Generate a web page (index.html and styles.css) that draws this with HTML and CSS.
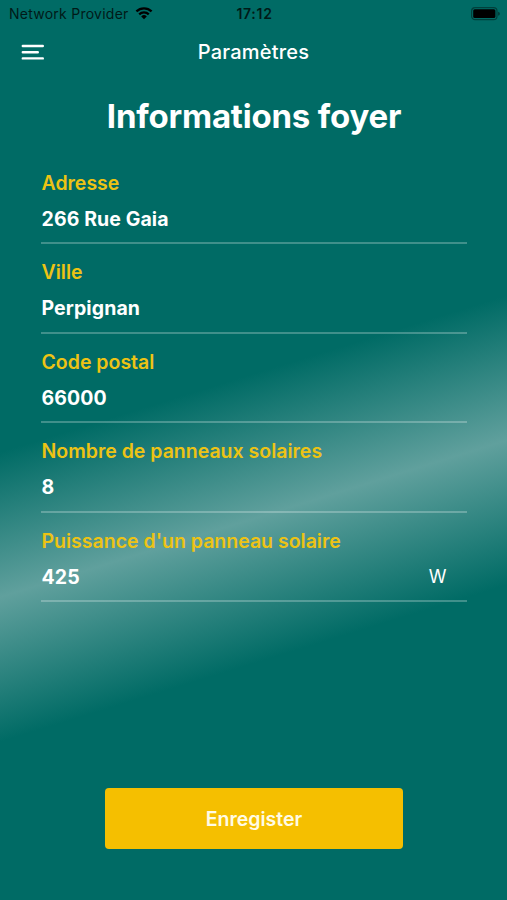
FILE: index.html
```
<!DOCTYPE html>
<html lang="fr">
<head>
  <meta charset="UTF-8">
  <meta name="viewport" content="width=device-width, initial-scale=1.0">
  <title>Paramètres</title>
  <link rel="stylesheet" href="styles.css">
</head>
<body>
  <div class="status-bar">
    <div class="network">
      <span class="provider">Network Provider</span>
      <svg class="wifi" viewBox="0 0 18 14" width="18" height="14">
        <path d="M0.6 4.6a12 12 0 0 1 16.8 0l-1.6 1.7a9.7 9.7 0 0 0-13.6 0z"/>
        <path d="M3.4 7.5a8 8 0 0 1 11.2 0l-1.6 1.7a5.8 5.8 0 0 0-8 0z"/>
        <path d="M6.2 10.4a4.1 4.1 0 0 1 5.6 0L9 13.2z"/>
      </svg>
    </div>
    <span class="time">17:12</span>
    <svg class="battery" viewBox="0 0 30 14" width="30" height="14">
      <rect class="battery-case" x="1.6" y="0.7" width="25.4" height="12" rx="3.5"/>
      <rect x="3.2" y="2.3" width="22.2" height="8.8" rx="1.5"/>
      <path class="battery-tip" d="M28 4.7q2 .6 2 2t-2 2z"/>
    </svg>
  </div>
  <header class="header">
    <svg class="menu" viewBox="0 0 23 17" width="23" height="17">
      <path d="M1.8 2h20M1.8 8.2h15M1.8 14.4h20"/>
    </svg>
    <span class="header-title">Paramètres</span>
  </header>
  <main class="content">
    <h1>Informations foyer</h1>
    <form class="form">
      <div class="field">
        <div class="label">Adresse</div>
        <div class="value">266 Rue Gaia</div>
      </div>
      <div class="field">
        <div class="label">Ville</div>
        <div class="value">Perpignan</div>
      </div>
      <div class="field">
        <div class="label">Code postal</div>
        <div class="value">66000</div>
      </div>
      <div class="field">
        <div class="label">Nombre de panneaux solaires</div>
        <div class="value">8</div>
      </div>
      <div class="field">
        <div class="label">Puissance d'un panneau solaire</div>
        <div class="value">425 <span class="unit">W</span></div>
      </div>
      <button class="save" type="button">Enregister</button>
    </form>
  </main>
</body>
</html>
```
FILE: styles.css
```
* {
  box-sizing: border-box;
}
body {
  margin: 0;
  height: 900px;
  overflow: hidden;
  font-family: Inter, "Liberation Sans", sans-serif;
  color: #ffffff;
  background: linear-gradient(162.8deg, #006b65 42.8%, #60a09d 56.5%, #006b65 70.2%);
}
.status-bar {
  display: grid;
  grid-template-columns: 1fr auto 1fr;
  align-items: center;
  height: 27px;
  padding: 0 7px 0 9px;
  color: #001a18;
  font-size: 14px;
}
.network {
  display: flex;
  align-items: center;
  gap: 6px;
}
.provider {
  letter-spacing: 0.25px;
}
.wifi {
  margin-top: -2px;
  fill: #000000;
}
.time {
  font-weight: 600;
  letter-spacing: 0.7px;
}
.battery {
  justify-self: end;
}
.battery-case {
  fill: none;
  stroke: #00403c;
  stroke-width: 1.2;
}
.battery-tip {
  fill: #00403c;
}
.header {
  display: grid;
  grid-template-columns: 1fr auto 1fr;
  align-items: center;
  height: 49px;
  padding: 0 21px;
}
.menu {
  margin-top: 2px;
}
.menu path {
  fill: none;
  stroke: #ffffff;
  stroke-width: 2.4;
  stroke-linecap: round;
}
.header-title {
  font-size: 20px;
  font-weight: 500;
  letter-spacing: 0.2px;
}
.content {
  padding: 0 40px 0 41px;
}
h1 {
  margin: 19px 0 33px;
  font-size: 33px;
  line-height: 42px;
  font-weight: 700;
  letter-spacing: -0.2px;
  text-align: center;
}
.form {
  display: flex;
  flex-direction: column;
}
.field {
  height: 89.5px;
  padding: 0 1px 0 0.5px;
  border-bottom: 2px solid rgba(255, 255, 255, 0.25);
  font-size: 19.5px;
  font-weight: 600;
}
.field:first-child {
  height: 74px;
}
.field:not(:first-child) {
  padding-top: 15px;
}
.label {
  line-height: 26px;
  color: #edc314;
}
.value {
  display: flex;
  justify-content: space-between;
  margin-top: 10.4px;
  line-height: 26px;
  font-weight: 700;
  letter-spacing: 0.1px;
}
.unit {
  margin-right: 19.5px;
  font-size: 18px;
  font-weight: 400;
}
.save {
  align-self: center;
  width: 298px;
  height: 61px;
  margin-top: 186px;
  border: none;
  border-radius: 4px;
  background-color: #f5bf00;
  color: #fffbe6;
  font-family: inherit;
  font-size: 19.5px;
  font-weight: 600;
}
```
